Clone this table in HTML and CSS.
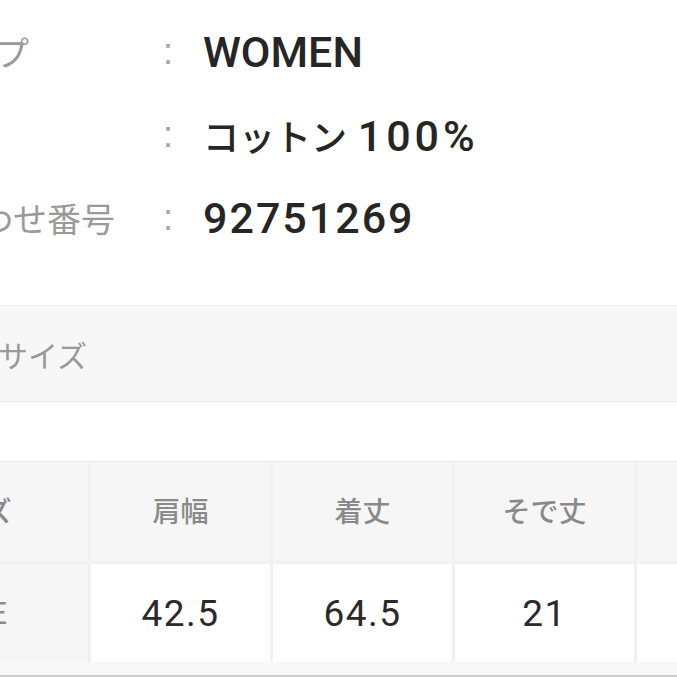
FILE: index.html
```html
<!DOCTYPE html>
<html lang="ja">
<head>
<meta charset="utf-8">
<title>商品情報</title>
<link rel="stylesheet" href="styles.css">
</head>
<body>
<div class="page">
  <dl class="specs">
    <div class="spec-row">
      <dt class="spec-label spec-label--wide">商品タイプ</dt>
      <dd class="spec-colon">:</dd>
      <dd class="spec-value">WOMEN</dd>
    </div>
    <div class="spec-row">
      <dt class="spec-label">素材</dt>
      <dd class="spec-colon">:</dd>
      <dd class="spec-value"><span class="kana">コットン</span> <span class="num num--pct">100%</span></dd>
    </div>
    <div class="spec-row">
      <dt class="spec-label">お問い合わせ番号</dt>
      <dd class="spec-colon">:</dd>
      <dd class="spec-value num">92751269</dd>
    </div>
  </dl>

  <div class="section-bar">商品サイズ</div>

  <div class="size-table">
    <div class="size-grid">
      <div class="cell head">サイズ</div>
      <div class="cell head">肩幅</div>
      <div class="cell head">着丈</div>
      <div class="cell head">そで丈</div>
      <div class="cell head">身幅</div>
      <div class="cell head">&nbsp;</div>
      <div class="cell head rowhead">FREE</div>
      <div class="cell data">42.5</div>
      <div class="cell data">64.5</div>
      <div class="cell data">21</div>
      <div class="cell data">51</div>
      <div class="cell data">&nbsp;</div>
    </div>
    <div class="size-foot"></div>
  </div>
</div>
</body>
</html>
```

FILE: styles.css
```css
html, body {
  margin: 0;
  padding: 0;
  background: #ffffff;
  overflow: hidden;
}

body {
  font-family: Roboto, "Noto Sans CJK JP", sans-serif;
  width: 677px;
  height: 677px;
}

.page {
  margin-left: -157px;
  width: 1300px;
}

.specs {
  margin: 0;
  padding-top: 10px;
}

.spec-row {
  display: flex;
  align-items: center;
  height: 83px;
}

.spec-label {
  width: 310px;
  font-family: "Noto Sans CJK JP", sans-serif;
  font-size: 34px;
  color: #9a9a9a;
  white-space: nowrap;
}

.spec-label--wide {
  letter-spacing: 4px;
}

.spec-colon {
  margin: 0;
  width: 30px;
  text-align: center;
  font-family: "Liberation Sans", sans-serif;
  font-size: 36px;
  color: #a6a6a6;
}

.spec-value {
  margin: 0 0 0 20px;
  font-size: 43px;
  font-weight: 500;
  color: #262626;
  white-space: nowrap;
}

.kana {
  font-family: "Noto Sans CJK JP", sans-serif;
  font-size: 36px;
}

.num {
  letter-spacing: 2px;
}

.num--pct {
  letter-spacing: 4px;
}

.section-bar {
  margin-top: 46px;
  height: 95px;
  display: flex;
  align-items: center;
  padding-left: 95px;
  background: #f7f7f7;
  border-top: 1px solid #ececec;
  border-bottom: 1px solid #ececec;
  font-family: "Noto Sans CJK JP", sans-serif;
  font-size: 30px;
  color: #999999;
}

.size-table {
  margin-top: 59px;
  margin-left: 9px;
}

.size-grid {
  display: grid;
  grid-template-columns: 236px repeat(5, 179px);
  gap: 3px;
  background: #f1f1f1;
  border-top: 1px solid #ebebeb;
}

.cell {
  display: flex;
  align-items: center;
  justify-content: center;
  white-space: nowrap;
}

.head {
  height: 99px;
  padding-bottom: 4px;
  box-sizing: border-box;
  background: #f6f6f6;
  font-family: "Noto Sans CJK JP", sans-serif;
  font-size: 28px;
  font-weight: 500;
  color: #8a8a8a;
}

.rowhead {
  height: 98px;
  padding-bottom: 0;
  font-family: Roboto, sans-serif;
  font-size: 32px;
  font-weight: 400;
  color: #8c8c8c;
}

.data {
  height: 98px;
  background: #ffffff;
  font-size: 37px;
  letter-spacing: 1.5px;
  color: #2a2a2a;
}

.size-foot {
  height: 13px;
  background: #f8f8f8;
  border-bottom: 2px solid #cfcfcf;
}
```
